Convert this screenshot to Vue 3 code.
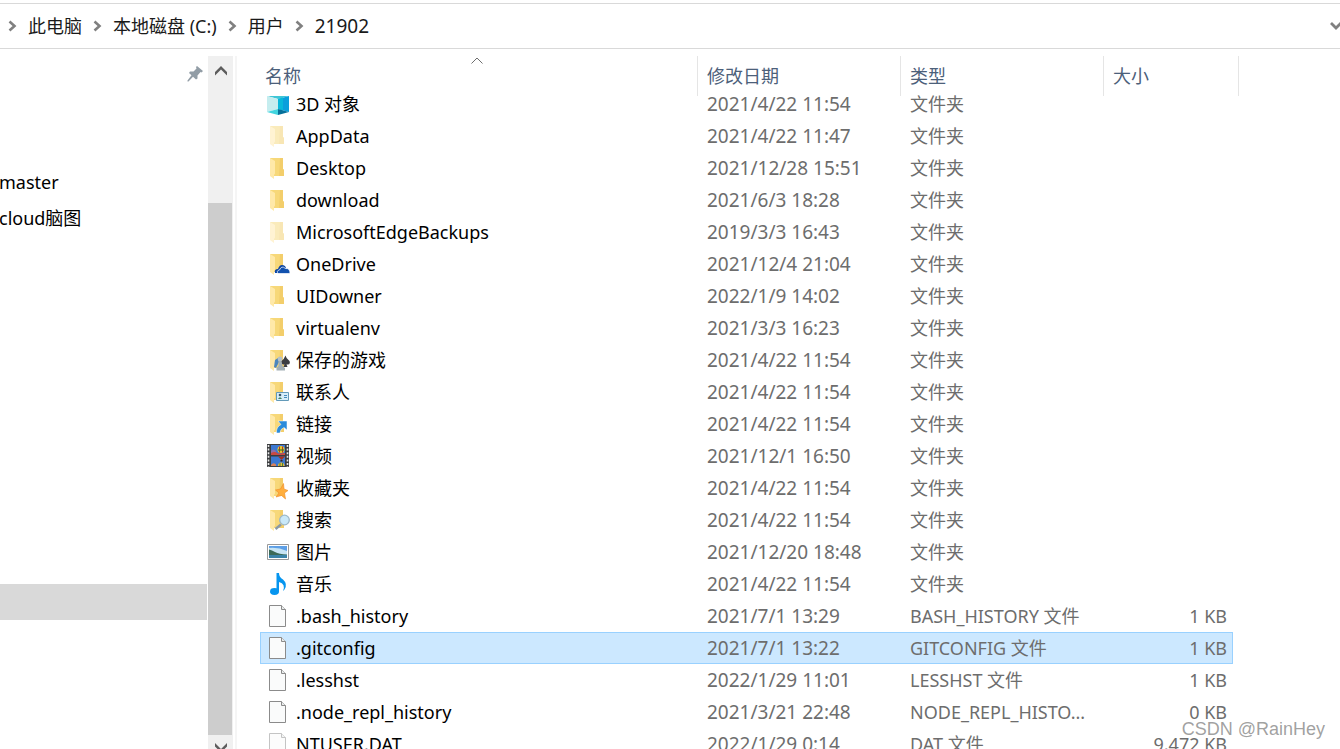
<template>
  <div class="explorer">
    <nav class="address" aria-label="路径">
      <template v-for="part in path" :key="part">
        <svg class="arrow" viewBox="0 0 9 12" aria-hidden="true">
          <path d="M1.5 1.5 L6.5 6 L1.5 10.5" />
        </svg>
        <a href="#" :class="{ latin: part === '21902' }">{{ part }}</a>
      </template>
      <button class="history" aria-label="以前的位置">
        <svg viewBox="0 0 14 10" aria-hidden="true"><path d="M2 2 L7 7 L12 2" /></svg>
      </button>
    </nav>

    <div class="body">
      <ul class="tree">
        <li class="pinned">
          <svg viewBox="0 0 16 16" aria-hidden="true">
            <path d="M10 0 L16 5 L14.5 6.5 L13.5 6 L10.5 9.5 L10.5 12.5 L9 13.5 L6 10.8 L1.5 15.5 L0.5 15.5 L0.5 14.5 L4.5 9.3 L2 7 L3 5.5 L6.5 5.5 L9.5 2.5 L9 1 Z" />
          </svg>
        </li>
        <li class="first"><a href="#">master</a></li>
        <li><a href="#">cloud脑图</a></li>
        <li class="current"></li>
      </ul>

      <div class="scrollbar">
        <button class="up" aria-label="向上滚动">
          <svg viewBox="0 0 12 10" aria-hidden="true"><path d="M0 6 L6 0 L12 6 V9.5 L6 3.5 L0 9.5 Z" /></svg>
        </button>
        <div class="thumb"></div>
        <button class="down" aria-label="向下滚动">
          <svg viewBox="0 0 12 10" aria-hidden="true"><path d="M0 0 L6 6 L12 0 V3.5 L6 9.5 L0 3.5 Z" /></svg>
        </button>
      </div>

      <main class="files">
        <table>
          <colgroup>
            <col />
            <col class="col-date" />
            <col class="col-type" />
            <col class="col-size" />
          </colgroup>
          <thead>
            <tr>
              <th>
                名称
                <svg class="sort" viewBox="0 0 12 7" aria-hidden="true"><path d="M0.5 6.5 L6 1 L11.5 6.5" /></svg>
              </th>
              <th>修改日期</th>
              <th>类型</th>
              <th>大小</th>
            </tr>
          </thead>
          <tbody>
            <tr v-for="file in files" :key="file.name" :class="{ selected: file.name === selected }" @click="selected = file.name">
              <td class="name">
                <div class="cell">
                  <svg class="icon" :class="{ faded: file.hidden }" viewBox="0 0 24 24" aria-hidden="true">
                    <!-- 3D 对象 -->
                    <g v-if="file.icon === 'cube'">
                      <path d="M1 4 H23 L12 7 Z" fill="#3fc6d6" />
                      <path d="M1 4 L12 7 V17 L1 20 Z" fill="#c5edef" />
                      <path d="M23 4 L12 7 V17 L23 20 Z" fill="#0a9fdc" />
                      <path d="M12 7 L17 5.6 V18.4 L12 17 Z" fill="#08b8da" />
                      <path d="M1 20 L12 17 V23 Z" fill="#42d5df" />
                      <path d="M23 20 L12 17 V23 Z" fill="#05709a" />
                    </g>
                    <g v-else-if="file.icon === 'file'">
                      <path d="M3.5 1.5 H15.5 L19.5 5.5 V22.5 H3.5 Z" fill="#fafbfb" stroke="#8b8b8b" />
                      <path d="M15.5 1.5 V5.5 H19.5" fill="#e9ecec" stroke="#8b8b8b" />
                    </g>
                    <g v-else-if="file.icon === 'video'">
                      <path d="M1 0 H23 V23 H1 Z" fill="#3b3d3f" />
                      <path d="M2.5 1 V23 M21.5 1 V23" stroke="#e8e8e8" stroke-width="1.6" stroke-dasharray="2 1.6" />
                      <path d="M5 1 H19 V11 H5 Z M5 12.5 H19 V22 H5 Z" fill="#3c78d2" />
                      <path d="M5 7 Q7 4 10 7 V9 H5 Z" fill="#8b70ac" />
                      <path d="M5 9 Q9 7 12 9.5 L19 9 V11 H5 Z" fill="#c94a43" />
                      <circle cx="15" cy="5.5" r="3.5" fill="#e5c72e" />
                      <path d="M13.5 2.5 V8.5 M16.5 2.5 V8.5" stroke="#b73524" />
                      <path d="M12 6 H18" stroke="#3a7a35" stroke-width="1.2" />
                      <path d="M12 12.5 H19 L15.5 16 Z" fill="#a8321f" />
                      <path d="M14.5 16 H16.5 V17.5 H14.5 Z" fill="#37271b" />
                      <path d="M5 21 Q7 18 10 20.5 V22 H5 Z" fill="#d9825a" />
                      <path d="M12 22 Q12 18.5 15 18.5 Q18.5 18.5 18.5 22 Z" fill="#ebb638" />
                      <path d="M14 22 V19 M16.5 22 V19" stroke="#438638" />
                    </g>
                    <g v-else-if="file.icon === 'picture'">
                      <path d="M1.5 4.5 H22.5 V19.5 H1.5 Z" fill="#fff" stroke="#999" />
                      <path d="M3 6 H21 V18 H3 Z" fill="#5d9fe6" />
                      <path d="M3 8 Q12 7 21 11 V15 H3 Z" fill="#c7e4f4" />
                      <path d="M3 9.5 Q6 10 9 12 Q13 14 21 14.5 V15.5 H3 Z" fill="#3b6a58" />
                      <path d="M3 15 H21 V18 H3 Z" fill="#3b83a8" />
                    </g>
                    <g v-else-if="file.icon === 'music'" fill="#0695ef">
                      <ellipse cx="8.5" cy="19.5" rx="4.5" ry="3.4" />
                      <path d="M10.5 1 H13 Q13 5 17 7.5 Q22 12 18.5 17.5 L17 19 Q20 12 13 10 V19.5 H10.5 Z" />
                    </g>
                    <g v-else>
                      <path d="M4 2 H17 V13 L18 14 V20 H8 Z" fill="#f7d879" />
                      <path d="M14 2 H17 V13 L18 14 V20 H13 Z" fill="#f3ce6b" />
                      <path d="M4 2 L9 5 V17.5 L8 19 V23 L4 20 Z" fill="#ffe9a9" />
                      <g v-if="file.icon === 'onedrive'">
                        <path d="M9 21 Q8 17 12 17 Q14 11 19 14 L20 16 L14 21 Z" fill="#0b45a4" />
                        <path d="M12 21.5 Q10 18.5 13.5 18 Q15.5 13 19.5 16.5 Q24 16 24 21.5 Z" fill="#1251ae" stroke="#fff" stroke-width="0.7" />
                      </g>
                      <g v-else-if="file.icon === 'games'">
                        <path d="M19.5 7.5 Q20 10.5 23.5 13 Q25 17 20.5 16.5 L21.5 19 H17.5 L18.5 16.5 Q15 17 15 13.5 Q18 11.5 19.5 7.5 Z" fill="#3b3d42" />
                        <path d="M9 12 L12 10 L13 14 L10 20 L8 19 Z" fill="#4c86bd" />
                        <circle cx="14" cy="11" r="2.4" fill="#b6c1c6" />
                        <path d="M12.5 13 H15.5 L16.5 18 L19 20 V22.5 H10.5 V20 L12.5 18 Z" fill="#a3b0b6" />
                      </g>
                      <g v-else-if="file.icon === 'contacts'">
                        <path d="M10.5 12.5 H22.5 V20.5 H10.5 Z" fill="#d5edf9" stroke="#639ab9" />
                        <circle cx="14" cy="15" r="1.3" fill="#395566" />
                        <path d="M12 19 Q14 15.5 16 19 Z" fill="#438566" />
                        <path d="M18 15.5 H21 M18 17.5 H21" stroke="#4589bb" />
                      </g>
                      <path v-else-if="file.icon === 'links'" d="M12 9 H21 V18 L18 15.5 Q14 17 14 21 H10.5 Q10 15 15 12.5 Z" fill="#2b8bda" stroke="#fff" stroke-width="0.5" />
                      <path v-else-if="file.icon === 'favorites'" d="M17.5 7.5 L18 13 L22 14.5 L18.5 17 L19.5 23 L15.5 19.5 L10 21 L13 17 L9.5 14 L14.5 13 Z" fill="#ffae3d" stroke="#ee8a25" stroke-width="0.6" />
                      <g v-else-if="file.icon === 'search'">
                        <path d="M15 16.5 L9.5 21" stroke="#8b9aa6" stroke-width="2.4" />
                        <circle cx="18.5" cy="12" r="4.8" fill="#c9e8f8" stroke="#9db8c8" stroke-width="1.3" />
                      </g>
                    </g>
                  </svg>
                  <span>{{ file.name }}</span>
                </div>
              </td>
              <td class="date">{{ file.date }}</td>
              <td>{{ file.type || '文件夹' }}</td>
              <td class="size">{{ file.size }}</td>
            </tr>
          </tbody>
        </table>
      </main>
    </div>

    <div class="watermark">CSDN @RainHey</div>
  </div>
</template>

<script setup>
import { ref } from 'vue'

const path = ['此电脑', '本地磁盘 (C:)', '用户', '21902']

const selected = ref('.gitconfig')

// Rows without a type are folders
const files = [
  { name: '3D 对象', icon: 'cube', date: '2021/4/22 11:54' },
  { name: 'AppData', icon: 'folder', date: '2021/4/22 11:47', hidden: true },
  { name: 'Desktop', icon: 'folder', date: '2021/12/28 15:51' },
  { name: 'download', icon: 'folder', date: '2021/6/3 18:28' },
  { name: 'MicrosoftEdgeBackups', icon: 'folder', date: '2019/3/3 16:43', hidden: true },
  { name: 'OneDrive', icon: 'onedrive', date: '2021/12/4 21:04' },
  { name: 'UIDowner', icon: 'folder', date: '2022/1/9 14:02' },
  { name: 'virtualenv', icon: 'folder', date: '2021/3/3 16:23' },
  { name: '保存的游戏', icon: 'games', date: '2021/4/22 11:54' },
  { name: '联系人', icon: 'contacts', date: '2021/4/22 11:54' },
  { name: '链接', icon: 'links', date: '2021/4/22 11:54' },
  { name: '视频', icon: 'video', date: '2021/12/1 16:50' },
  { name: '收藏夹', icon: 'favorites', date: '2021/4/22 11:54' },
  { name: '搜索', icon: 'search', date: '2021/4/22 11:54' },
  { name: '图片', icon: 'picture', date: '2021/12/20 18:48' },
  { name: '音乐', icon: 'music', date: '2021/4/22 11:54' },
  { name: '.bash_history', icon: 'file', date: '2021/7/1 13:29', type: 'BASH_HISTORY 文件', size: '1 KB' },
  { name: '.gitconfig', icon: 'file', date: '2021/7/1 13:22', type: 'GITCONFIG 文件', size: '1 KB' },
  { name: '.lesshst', icon: 'file', date: '2022/1/29 11:01', type: 'LESSHST 文件', size: '1 KB' },
  { name: '.node_repl_history', icon: 'file', date: '2021/3/21 22:48', type: 'NODE_REPL_HISTO...', size: '0 KB' },
  { name: 'NTUSER.DAT', icon: 'file', date: '2022/1/29 0:14', type: 'DAT 文件', size: '9,472 KB', hidden: true }
]
</script>

<style>
body {
  margin: 0;
  background: #fff;
}
</style>

<style scoped>
.explorer {
  position: relative;
  display: flex;
  flex-direction: column;
  height: 100vh;
  padding-top: 3px;
  box-sizing: border-box;
  overflow: hidden;
  font-family: "Noto Sans", "Noto Sans CJK SC", sans-serif;
  font-size: 18px;
  line-height: 24px;
  color: #000;
}

a {
  color: inherit;
  text-decoration: none;
}

button {
  padding: 0;
  border: 0;
  background: none;
}

.address {
  display: flex;
  flex: none;
  align-items: center;
  height: 44px;
  padding-left: 8px;
  border-top: 1px solid #d9d9d9;
  border-bottom: 1px solid #d9d9d9;
  color: #1a1a1a;
}

.address a {
  margin: 0 11px;
  white-space: nowrap;
}

.address .latin {
  font-size: 19px;
}

.arrow {
  flex: none;
  width: 9px;
  height: 12px;
  fill: none;
  stroke: #808080;
  stroke-width: 2.6;
}

.history {
  flex: none;
  width: 11px;
  height: 10px;
  margin-left: auto;
  overflow: hidden;
}

.history svg {
  display: block;
  width: 14px;
  height: 10px;
  fill: none;
  stroke: #808080;
  stroke-width: 2.8;
}

.body {
  display: flex;
  flex: 1;
  min-height: 0;
  padding-top: 7px;
}

.tree {
  flex: none;
  width: 207px;
  margin: 0 1px 0 0;
  padding: 0;
  overflow: hidden;
  list-style: none;
}

.tree li {
  display: flex;
  align-items: center;
  height: 36px;
}

.tree a {
  margin-left: -1px;
  white-space: nowrap;
}

.tree .pinned {
  justify-content: flex-end;
  padding-right: 4px;
}

.pinned svg {
  width: 16px;
  height: 16px;
  fill: #929da6;
}

.tree .first {
  margin-top: 72px;
}

.tree .current {
  margin-top: 348px;
  background: #d9d9d9;
}

.scrollbar {
  display: flex;
  flex: none;
  flex-direction: column;
  width: 25px;
  background: #f0f0f0;
}

.scrollbar button {
  display: flex;
  flex: none;
  justify-content: center;
}

.scrollbar svg {
  flex: none;
  width: 12px;
  height: 10px;
  fill: #5c5c5c;
}

.scrollbar .up {
  height: 147px;
  padding-top: 10px;
}

.scrollbar .down {
  height: 14px;
  padding-top: 8px;
  overflow: hidden;
}

.thumb {
  flex: 1;
  margin-right: 1px;
  background: #cdcdcd;
}

.files {
  flex: 1;
  min-width: 0;
  margin-left: 2px;
  padding: 0 107px 0 23px;
  border-left: 2px solid #f5f5f5;
}

table {
  width: 100%;
  table-layout: fixed;
  border-collapse: collapse;
}

.col-date,
.col-type {
  width: 203px;
}

.col-size {
  width: 130px;
}

th {
  position: relative;
  height: 24px;
  padding: 8px 0 0 10px;
  font-weight: 400;
  text-align: left;
  color: #4c607a;
}

th:first-child {
  padding-left: 5px;
}

/* column dividers run down over the first row */
th::after {
  content: "";
  position: absolute;
  top: 0;
  right: -1px;
  width: 1px;
  height: 40px;
  background: #e5e5e5;
}

th:last-child::after {
  right: -6px;
}

.sort {
  position: absolute;
  top: 1px;
  left: 50%;
  width: 12px;
  height: 7px;
  margin-left: -8px;
  fill: none;
  stroke: #6d6d6d;
}

td {
  height: 32px;
  padding: 0 0 0 10px;
  white-space: nowrap;
  color: #6d6d6d;
}

.name {
  padding-left: 6px;
  color: #000;
}

.cell {
  display: flex;
  align-items: center;
}

.icon {
  flex: none;
  width: 24px;
  height: 24px;
  margin-right: 6px;
}

.faded {
  opacity: 0.5;
}

.date {
  font-size: 19px;
}

.size {
  padding-right: 6px;
  text-align: right;
}

.selected {
  background: #cce8ff;
  outline: 1px solid #99d1ff;
  outline-offset: -1px;
}

.watermark {
  position: absolute;
  right: 15px;
  bottom: 8px;
  font-family: "Liberation Sans", sans-serif;
  font-size: 18px;
  color: rgba(130, 130, 130, 0.75);
}
</style>
